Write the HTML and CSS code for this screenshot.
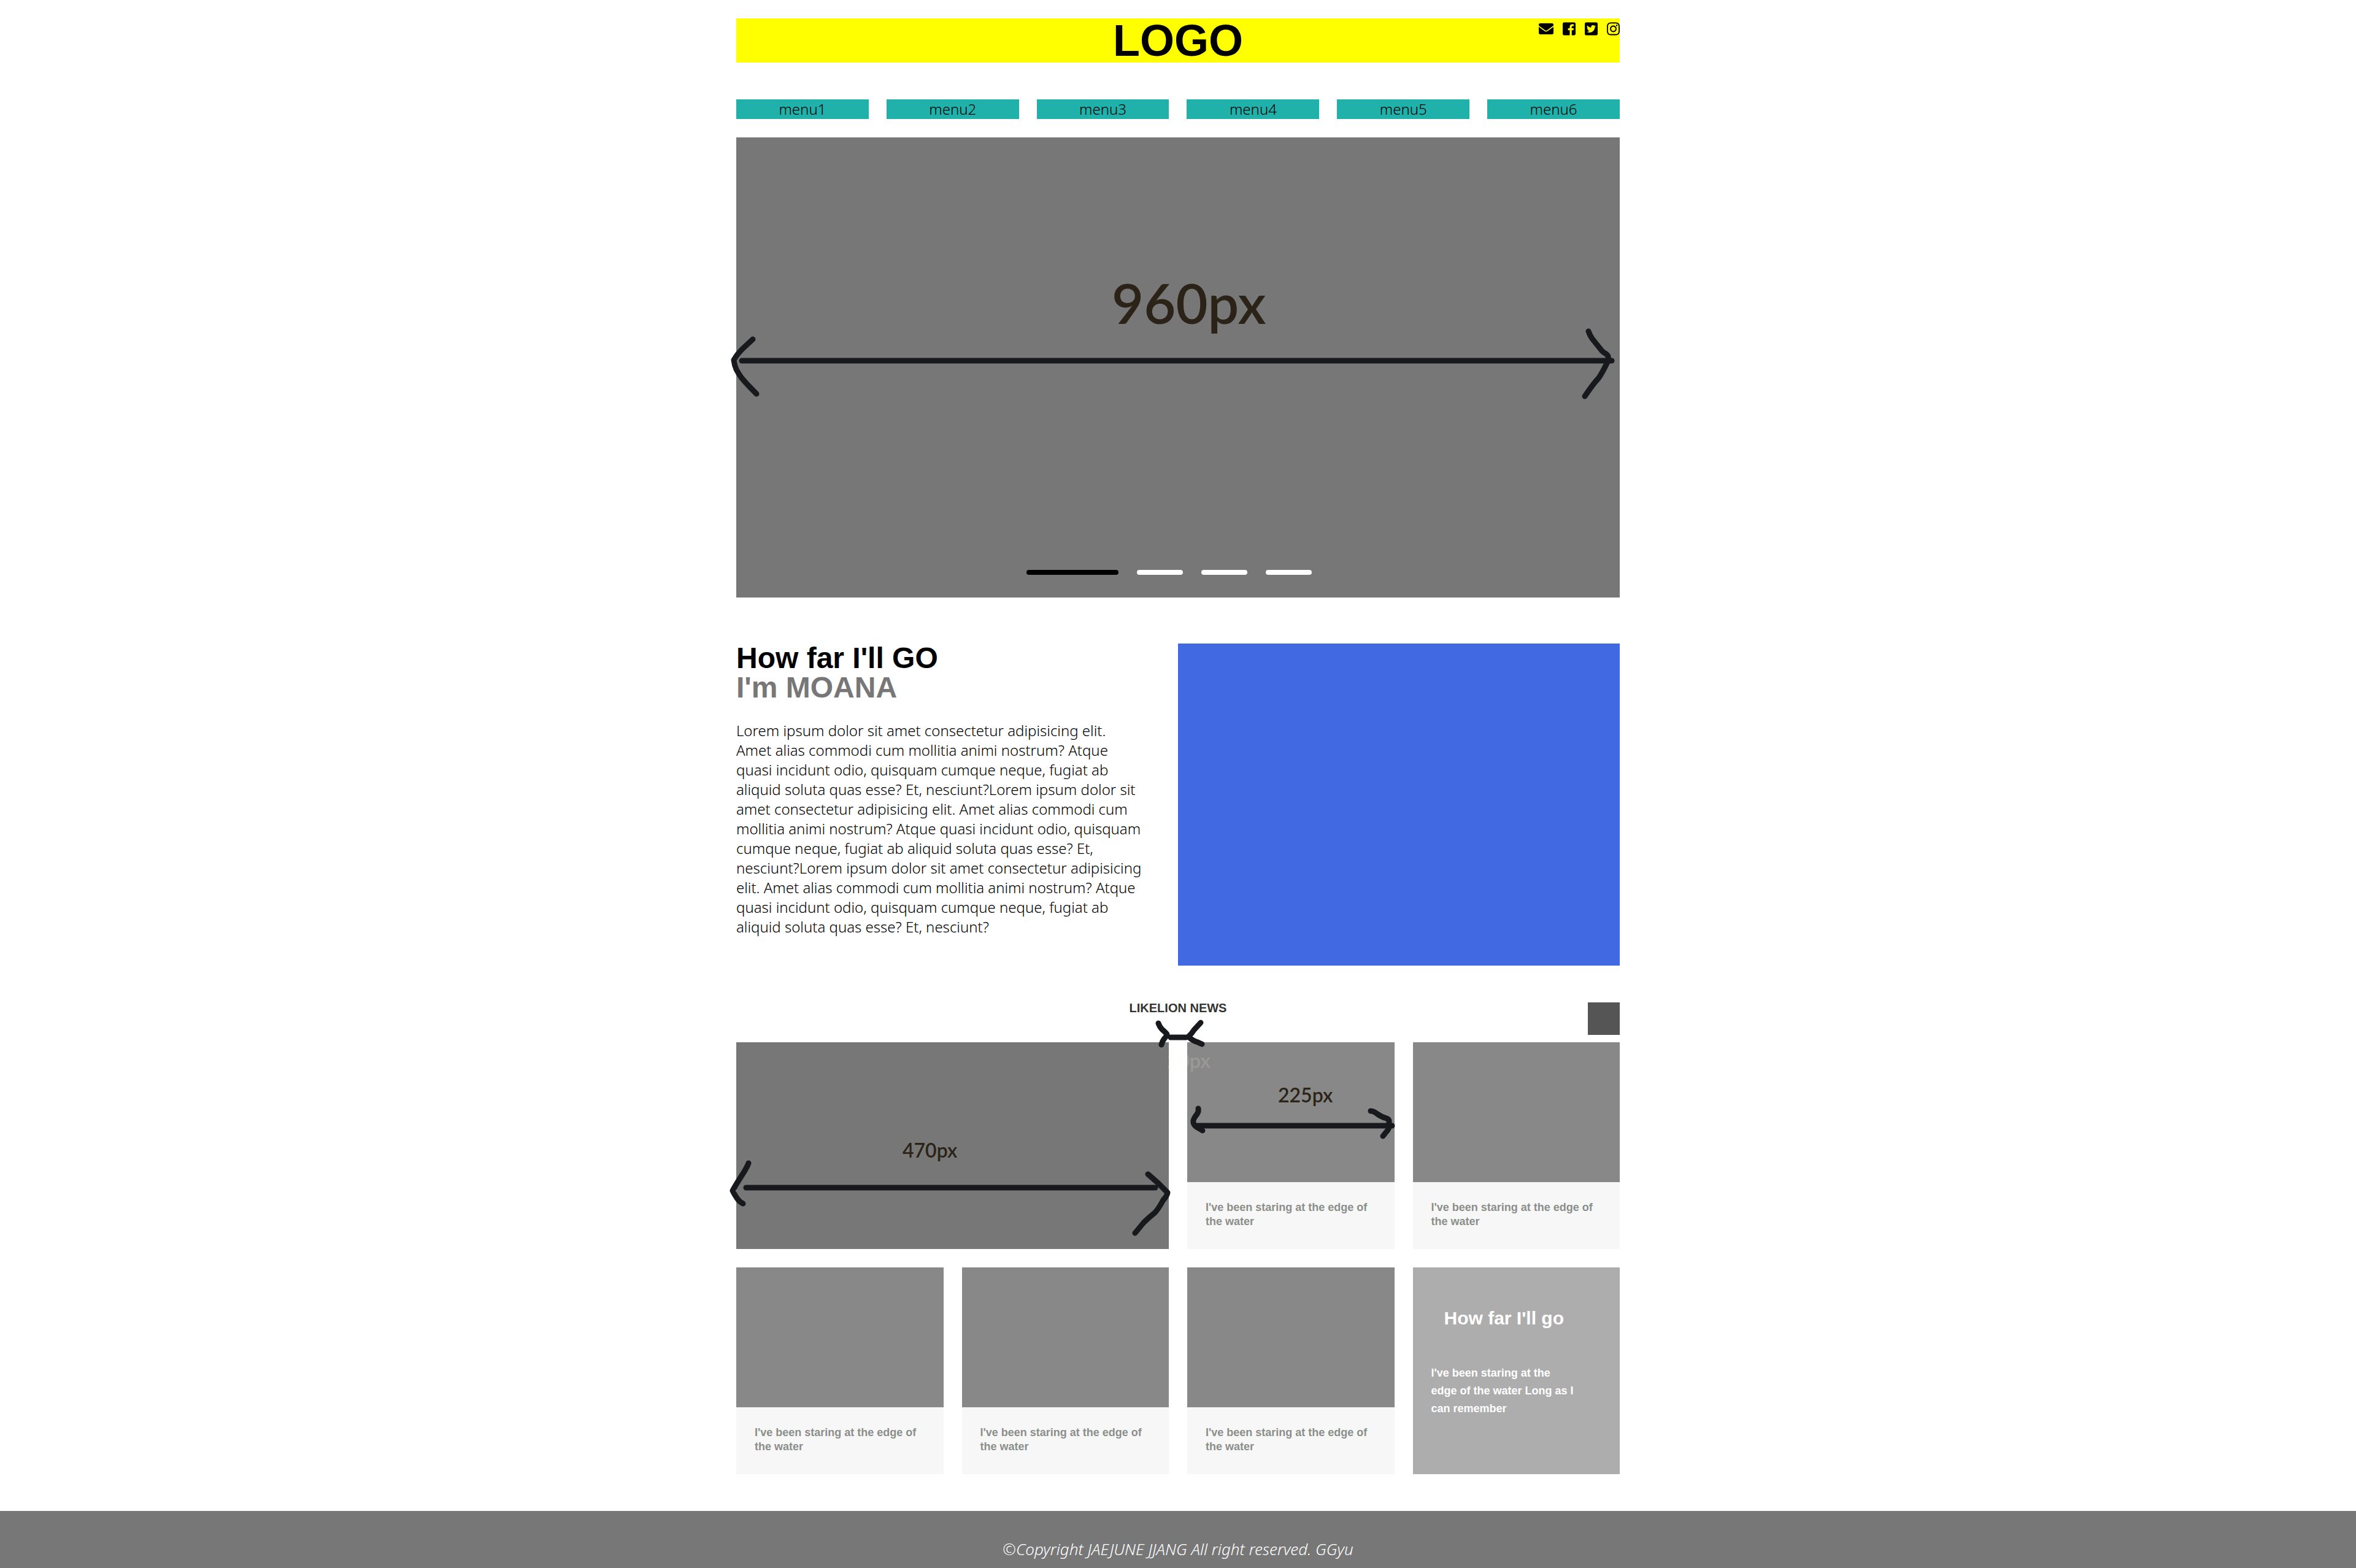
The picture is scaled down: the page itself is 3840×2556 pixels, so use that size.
FILE: index.html
```html
<!DOCTYPE html>
<html lang="ko">
<head>
<meta charset="utf-8">
<meta name="viewport" content="width=device-width, initial-scale=1">
<title>LIKELION NEWS</title>
<link rel="stylesheet" href="styles.css">
</head>
<body>
<div class="container">
  <header class="header">
    <h1 class="logo">LOGO</h1>
    <div class="social">
      <a href="#" aria-label="Email"><svg class="icon icon-wide" viewBox="0 0 512 512"><path d="M502.3 190.8c3.9-3.1 9.7-.2 9.7 4.7V400c0 26.5-21.5 48-48 48H48c-26.5 0-48-21.5-48-48V195.6c0-5 5.7-7.8 9.7-4.7 22.4 17.4 52.1 39.5 154.1 113.6 21.1 15.4 56.7 47.8 92.2 47.6 35.7.3 72-32.8 92.3-47.6 102-74.1 131.6-96.3 154-113.7zM256 320c23.2.4 56.6-29.2 73.4-41.4 132.7-96.3 142.8-104.7 173.4-128.7 5.8-4.5 9.2-11.5 9.2-18.9v-19c0-26.5-21.5-48-48-48H48c-26.5 0-48 21.5-48 48v19c0 7.4 3.4 14.3 9.2 18.9 30.6 23.9 40.7 32.4 173.4 128.7 16.8 12.2 50.2 41.8 73.4 41.4z"/></svg></a>
      <a href="#" aria-label="Facebook"><svg class="icon" viewBox="0 0 448 512"><path d="M448 80v352c0 26.5-21.5 48-48 48h-85.3V302.8h60.6l8.7-67.6h-69.3V192c0-19.6 5.4-32.9 33.5-32.9H384V98.7c-6.2-.8-27.4-2.7-52.2-2.7-51.6 0-87 31.5-87 89.4v49.9H184v67.6h60.9V480H48c-26.5 0-48-21.5-48-48V80c0-26.5 21.5-48 48-48h352c26.5 0 48 21.5 48 48z"/></svg></a>
      <a href="#" aria-label="Twitter"><svg class="icon" viewBox="0 0 448 512"><path d="M400 32H48C21.5 32 0 53.5 0 80v352c0 26.5 21.5 48 48 48h352c26.5 0 48-21.5 48-48V80c0-26.5-21.5-48-48-48zm-48.9 158.8c.2 2.8.2 5.7.2 8.5 0 86.7-66 186.6-186.6 186.6-37.2 0-71.7-10.8-100.7-29.4 5.3.6 10.4.8 15.8.8 30.7 0 58.9-10.4 81.4-28-28.8-.6-53-19.5-61.3-45.5 10.1 1.5 19.2 1.5 29.6-1.2-30-6.1-52.5-32.5-52.5-64.4v-.8c8.7 4.9 18.9 7.9 29.6 8.3a65.447 65.447 0 0 1-29.2-54.6c0-12.2 3.2-23.4 8.9-33.1 32.3 39.8 80.8 65.8 135.2 68.6-9.3-44.5 24-80.6 64-80.6 18.9 0 35.9 7.9 47.9 20.7 14.8-2.8 29-8.3 41.6-15.8-4.9 15.2-15.2 28-28.8 36.1 13.2-1.4 26-5.1 37.8-10.2-8.9 13.1-20.1 24.7-32.9 34z"/></svg></a>
      <a href="#" aria-label="Instagram"><svg class="icon" viewBox="0 0 448 512"><path d="M224.1 141c-63.6 0-114.9 51.3-114.9 114.9s51.3 114.9 114.9 114.9S339 319.5 339 255.9 287.7 141 224.1 141zm0 189.6c-41.1 0-74.7-33.5-74.7-74.7s33.5-74.7 74.7-74.7 74.7 33.5 74.7 74.7-33.6 74.7-74.7 74.7zm146.4-194.3c0 14.9-12 26.8-26.8 26.8-14.9 0-26.8-12-26.8-26.8s12-26.8 26.8-26.8 26.8 12 26.8 26.8zm76.1 27.2c-1.7-35.9-9.9-67.7-36.2-93.9-26.2-26.2-58-34.4-93.9-36.2-37-2.1-147.9-2.1-184.9 0-35.8 1.7-67.6 9.9-93.9 36.1s-34.4 58-36.2 93.9c-2.1 37-2.1 147.9 0 184.9 1.7 35.9 9.9 67.7 36.2 93.9s58 34.4 93.9 36.2c37 2.1 147.9 2.1 184.9 0 35.9-1.7 67.7-9.9 93.9-36.2 26.2-26.2 34.4-58 36.2-93.9 2.1-37 2.1-147.8 0-184.8zM398.8 388c-7.8 19.6-22.9 34.7-42.6 42.6-29.5 11.7-99.5 9-132.1 9s-102.7 2.6-132.1-9c-19.6-7.8-34.7-22.9-42.6-42.6-11.7-29.5-9-99.5-9-132.1s-2.6-102.7 9-132.1c7.8-19.6 22.9-34.7 42.6-42.6 29.5-11.7 99.5-9 132.1-9s102.7-2.6 132.1 9c19.6 7.8 34.7 22.9 42.6 42.6 11.7 29.5 9 99.5 9 132.1s2.7 102.7-9 132.1z"/></svg></a>
    </div>
  </header>

  <nav class="menu">
    <a href="#">menu1</a>
    <a href="#">menu2</a>
    <a href="#">menu3</a>
    <a href="#">menu4</a>
    <a href="#">menu5</a>
    <a href="#">menu6</a>
  </nav>

  <section class="hero">
    <svg class="notes" viewBox="0 0 1440 750">
      <text class="note-large" x="612" y="304">960px</text>
      <path d="M9 364H1427"/>
      <path d="M27 329L13 342Q2 352 -4 363Q-3 371 0 378Q3 384 8 391Q14 399 33 418"/>
      <path d="M1389 316Q1391 322 1395 328L1411 348Q1414 351 1418 353Q1423 357 1421 364Q1411 385 1405 393Q1398 400 1383 422"/>
    </svg>
    <div class="dots">
      <button class="dot dot-active" aria-label="Slide 1"></button>
      <button class="dot" aria-label="Slide 2"></button>
      <button class="dot" aria-label="Slide 3"></button>
      <button class="dot" aria-label="Slide 4"></button>
    </div>
  </section>

  <section class="about">
    <div class="about-text">
      <h2 class="about-title">How far I'll GO</h2>
      <h2 class="about-title about-subtitle">I'm MOANA</h2>
      <p class="about-body">Lorem ipsum dolor sit amet consectetur adipisicing elit.<br>
        Amet alias commodi cum mollitia animi nostrum? Atque<br>
        quasi incidunt odio, quisquam cumque neque, fugiat ab<br>
        aliquid soluta quas esse? Et, nesciunt?Lorem ipsum dolor sit<br>
        amet consectetur adipisicing elit. Amet alias commodi cum<br>
        mollitia animi nostrum? Atque quasi incidunt odio, quisquam<br>
        cumque neque, fugiat ab aliquid soluta quas esse? Et,<br>
        nesciunt?Lorem ipsum dolor sit amet consectetur adipisicing<br>
        elit. Amet alias commodi cum mollitia animi nostrum? Atque<br>
        quasi incidunt odio, quisquam cumque neque, fugiat ab<br>
        aliquid soluta quas esse? Et, nesciunt?</p>
    </div>
    <div class="about-media"></div>
  </section>

  <section class="news">
    <div class="news-head">
      <h3 class="news-title">LIKELION NEWS</h3>
      <button class="news-more" aria-label="More news"></button>
    </div>
    <div class="news-grid">
      <article class="feature"></article>
      <article class="card">
        <div class="thumb"></div>
        <p class="caption">I've been staring at the edge of the water</p>
      </article>
      <article class="card">
        <div class="thumb"></div>
        <p class="caption">I've been staring at the edge of the water</p>
      </article>
      <article class="card">
        <div class="thumb"></div>
        <p class="caption">I've been staring at the edge of the water</p>
      </article>
      <article class="card">
        <div class="thumb"></div>
        <p class="caption">I've been staring at the edge of the water</p>
      </article>
      <article class="card">
        <div class="thumb"></div>
        <p class="caption">I've been staring at the edge of the water</p>
      </article>
      <article class="card quote">
        <h3 class="quote-title">How far I'll go</h3>
        <p class="quote-body">I've been staring at the edge of the water Long as I can remember</p>
      </article>
      <svg class="notes" viewBox="0 0 1440 704">
        <text class="note" x="271" y="188">470px</text>
        <path d="M16 237H683"/>
        <path d="M20 197Q18 203 11 214Q0 231 -6 242Q-3 248 1 254Q5 260 11 263"/>
        <path d="M671 215L687 229Q699 241 703 245Q702 251 696 257Q688 272 682 278Q672 286 664 294L650 311"/>
        <text class="note" x="883" y="98">225px</text>
        <path d="M752 136H1069"/>
        <path d="M753 108Q754 113 751 117Q744 126 745 130Q745 134 750 138L760 144"/>
        <path d="M1034 112Q1039 112 1045 117Q1052 122 1060 124Q1065 126 1064 132Q1066 137 1062 143L1054 153"/>
        <text class="note note-faint" x="702" y="42">20px</text>
        <path d="M708 -8H733"/>
        <path d="M688 -31Q690 -25 694 -21Q700 -16 702 -13Q701 -9 697 -5Q694 -1 693 4"/>
        <path d="M757 -32L746 -20Q743 -15 737 -9Q742 -4 747 -2Q753 0 759 3"/>
      </svg>
    </div>
  </section>
</div>

<footer class="footer">©Copyright JAEJUNE JJANG All right reserved. GGyu</footer>
</body>
</html>
```
FILE: styles.css
```css
* {
  box-sizing: border-box;
  margin: 0;
  padding: 0;
}

body {
  background: #fff;
  color: #000;
  font-family: "Noto Sans", "Noto Sans CJK KR", sans-serif;
  font-size: 24px;
  font-weight: 300;
  line-height: 32px;
}

a {
  color: inherit;
  text-decoration: none;
}

button {
  border: 0;
  cursor: pointer;
}

h1,
h2,
h3,
.caption,
.quote-body {
  font-family: "Liberation Sans", Arial, sans-serif;
  font-weight: 700;
}

.container {
  width: 100%;
  max-width: 1440px;
  margin: 0 auto;
  padding-top: 30px;
}

/* Header */
.header {
  display: grid;
  grid-template-columns: 1fr auto 1fr;
  background: #ff0;
}

.logo {
  grid-column: 2;
  font-size: 72px;
  line-height: 72px;
}

.social {
  display: flex;
  justify-content: flex-end;
  align-items: flex-start;
  gap: 15px;
  padding-top: 5px;
}

.social a {
  display: flex;
}

.icon {
  width: 21px;
  height: 24px;
}

.icon-wide {
  width: 24px;
}

/* Menu */
.menu {
  display: grid;
  grid-template-columns: repeat(6, 1fr);
  gap: 29px;
  margin: 60px 0 30px;
}

.menu a {
  background: #20b2aa;
  text-align: center;
}

/* Hero */
.hero {
  position: relative;
  display: flex;
  align-items: flex-end;
  justify-content: center;
  aspect-ratio: 1440 / 750;
  padding-bottom: 37px;
  background: #777;
}

.dots {
  display: flex;
}

.dot {
  width: 75px;
  height: 8px;
  margin-right: 30px;
  border-radius: 4px;
  background: #fff;
}

.dot-active {
  width: 150px;
  background: #000;
}

/* Size notes drawn over the blocks */
.notes {
  position: absolute;
  top: 0;
  left: 0;
  width: 100%;
  overflow: visible;
  pointer-events: none;
}

.notes path {
  fill: none;
  stroke: #18191d;
  stroke-width: 9px;
  stroke-linecap: round;
  stroke-linejoin: round;
}

.notes text {
  fill: #2b2317;
  font-family: Lato, sans-serif;
  font-weight: 600;
}

.note {
  font-size: 32px;
}

.note-large {
  font-size: 90px;
}

.notes .note-faint {
  fill: rgb(255 250 225 / 18%);
}

/* About */
.about {
  display: grid;
  grid-template-columns: 1fr 1fr;
  padding-top: 75px;
}

.about-title {
  font-size: 48px;
  line-height: 48px;
}

.about-subtitle {
  color: #777;
}

.about-body {
  padding-top: 30px;
}

.about-media {
  min-height: 525px;
  background: #4169e1;
}

/* News */
.news {
  padding: 60px 0;
}

.news-head {
  display: grid;
  grid-template-columns: 1fr auto 1fr;
  align-items: start;
  margin-bottom: 12px;
}

.news-title {
  grid-column: 2;
  color: #333;
  font-size: 20px;
  line-height: 18px;
}

.news-more {
  justify-self: end;
  width: 52px;
  height: 53px;
  background: #555;
}

.news-grid {
  position: relative;
  display: grid;
  grid-template-columns: repeat(4, 1fr);
  gap: 30px;
}

.feature {
  grid-column: span 2;
  background: #777;
}

.card {
  background: #f7f7f7;
}

.thumb {
  height: 228px;
  background: #888;
}

.caption {
  padding: 30px 30px 33px;
  color: #8b8f8b;
  font-size: 18px;
  line-height: 23px;
}

.quote {
  padding: 66px 70px 0 30px;
  background: #adadad;
  color: #fff;
}

.quote-title {
  margin-bottom: 58px;
  font-size: 30px;
  line-height: 34px;
  text-align: center;
}

.quote-body {
  font-size: 18px;
  line-height: 29px;
}

/* Footer */
.footer {
  padding: 46px 0 15px;
  background: #777;
  color: #fff;
  font-size: 26px;
  font-style: italic;
  text-align: center;
}
```
